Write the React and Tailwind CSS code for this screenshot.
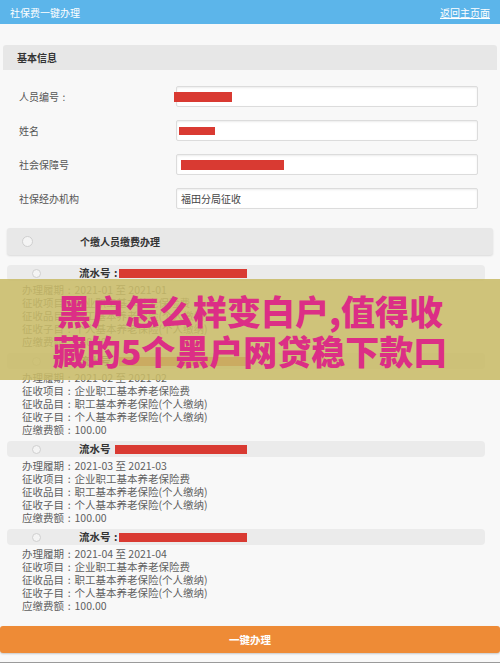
import React from 'react';

const font = { fontFamily: '"Noto Sans CJK SC", "Noto Sans", sans-serif' };

const fields = [
  { label: '人员编号', colon: true, bar: 'ml-[-3px] w-[58px] h-[10px]' },
  { label: '姓名', bar: 'ml-[2px] w-[36px] h-[8px]' },
  { label: '社会保障号', bar: 'ml-[4px] w-[103px] h-[10px]' },
  { label: '社保经办机构', text: '福田分局征收' },
];

const items = [
  { month: '01', colon: true },
  { month: '02', colon: true },
  { month: '03', colon: false },
  { month: '04', colon: true },
];

function Colon() {
  return <span className="inline-block w-[1em] text-center">:</span>;
}

function Radio({ size = 'w-[9px] h-[9px]' }) {
  return <div className={`${size} rounded-full border border-[#cfcfcf] bg-[#f4f4f4]`} />;
}

function Line({ k, v }) {
  return (
    <div>
      {k}
      <Colon />
      {v}
    </div>
  );
}

function Item({ month, colon }) {
  return (
    <div className="flex flex-col">
      <div className="ml-[7px] mr-[15px] h-[16px] bg-[#ebebeb] rounded-sm flex items-center">
        <div className="w-[58px] flex justify-center pl-[1px]">
          <Radio />
        </div>
        <span className="ml-[14px] text-[10.5px] font-semibold text-[#333] leading-none">
          流水号{colon ? <Colon /> : <span className="inline-block w-[4px]" />}
        </span>
        <div className={`h-[9px] bg-[#d93a32] ${colon ? 'w-[128px] ml-[-2px]' : 'w-[132px] ml-[0px]'}`} />
      </div>
      <div className="pl-[22px] pt-[2px] pb-[5px] text-[10.5px] leading-[13px] text-[#5f5f5f]">
        <Line k="办理履期" v={`2021-${month} 至 2021-${month}`} />
        <Line k="征收项目" v="企业职工基本养老保险费" />
        <Line k="征收品目" v="职工基本养老保险(个人缴纳)" />
        <Line k="征收子目" v="个人基本养老保险(个人缴纳)" />
        <Line k="应缴费额" v="100.00" />
      </div>
    </div>
  );
}

export default function App() {
  return (
    <div className="relative w-[500px] h-[663px] bg-[#f8f8f8] overflow-hidden" style={font}>
      <header className="h-[24px] bg-[#5cb5ea] flex items-center justify-between px-[10px] text-white text-[10px]">
        <span>社保费一键办理</span>
        <span className="underline">返回主页面</span>
      </header>

      <div className="mt-[21px] mx-[3px] h-[25px] bg-[#e7e7e7] rounded-t-[3px] flex items-center px-[14px] text-[10px] font-semibold text-[#333]">
        基本信息
      </div>

      <div className="mt-[16px] flex flex-col gap-[13px]">
        {fields.map((f) => (
          <div key={f.label} className="flex items-center h-[21px]">
            <span className="w-[176px] pl-[19px] text-[10px] text-[#555]">
              {f.label}
              {f.colon && <Colon />}
            </span>
            <div className="w-[302px] h-[21px] bg-white border border-[#dcdcdc] rounded-[2px] shadow-[inset_0_1px_2px_rgba(0,0,0,0.08)] flex items-center">
              {f.bar && <div className={`${f.bar} bg-[#d93a32]`} />}
              {f.text && <span className="pl-[4px] text-[10px] text-[#444]">{f.text}</span>}
            </div>
          </div>
        ))}
      </div>

      <div className="mt-[19px] mx-[7px] h-[27px] bg-[#e8e8e8] rounded-[3px] shadow-[0_1px_2px_rgba(0,0,0,0.12)] flex items-center">
        <div className="w-[40px] flex justify-center">
          <Radio size="w-[11px] h-[11px]" />
        </div>
        <span className="ml-[33px] text-[10px] font-semibold text-[#333]">个缴人员缴费办理</span>
      </div>

      <div className="mt-[10px] flex flex-col">
        {items.map((it) => (
          <Item key={it.month} {...it} />
        ))}
      </div>

      <button className="mt-[9px] w-full h-[27px] bg-[#ee8b36] rounded-[3px] shadow-[0_1px_2px_rgba(0,0,0,0.2)] text-white text-[10.5px] font-semibold">
        一键办理
      </button>

      <div className="absolute left-0 right-0 bottom-0 h-[1px] bg-[#9a9a9a]" />

      <div className="absolute left-0 right-0 top-[279px] h-[101px] bg-[#c8bb68]/[0.88] flex flex-col items-center pt-[12px] text-[34px] leading-[40px] font-black text-[#dc2e86]">
        <div>黑户怎么样变白户,值得收</div>
        <div>藏的5个黑户网贷稳下款口</div>
      </div>
    </div>
  );
}
